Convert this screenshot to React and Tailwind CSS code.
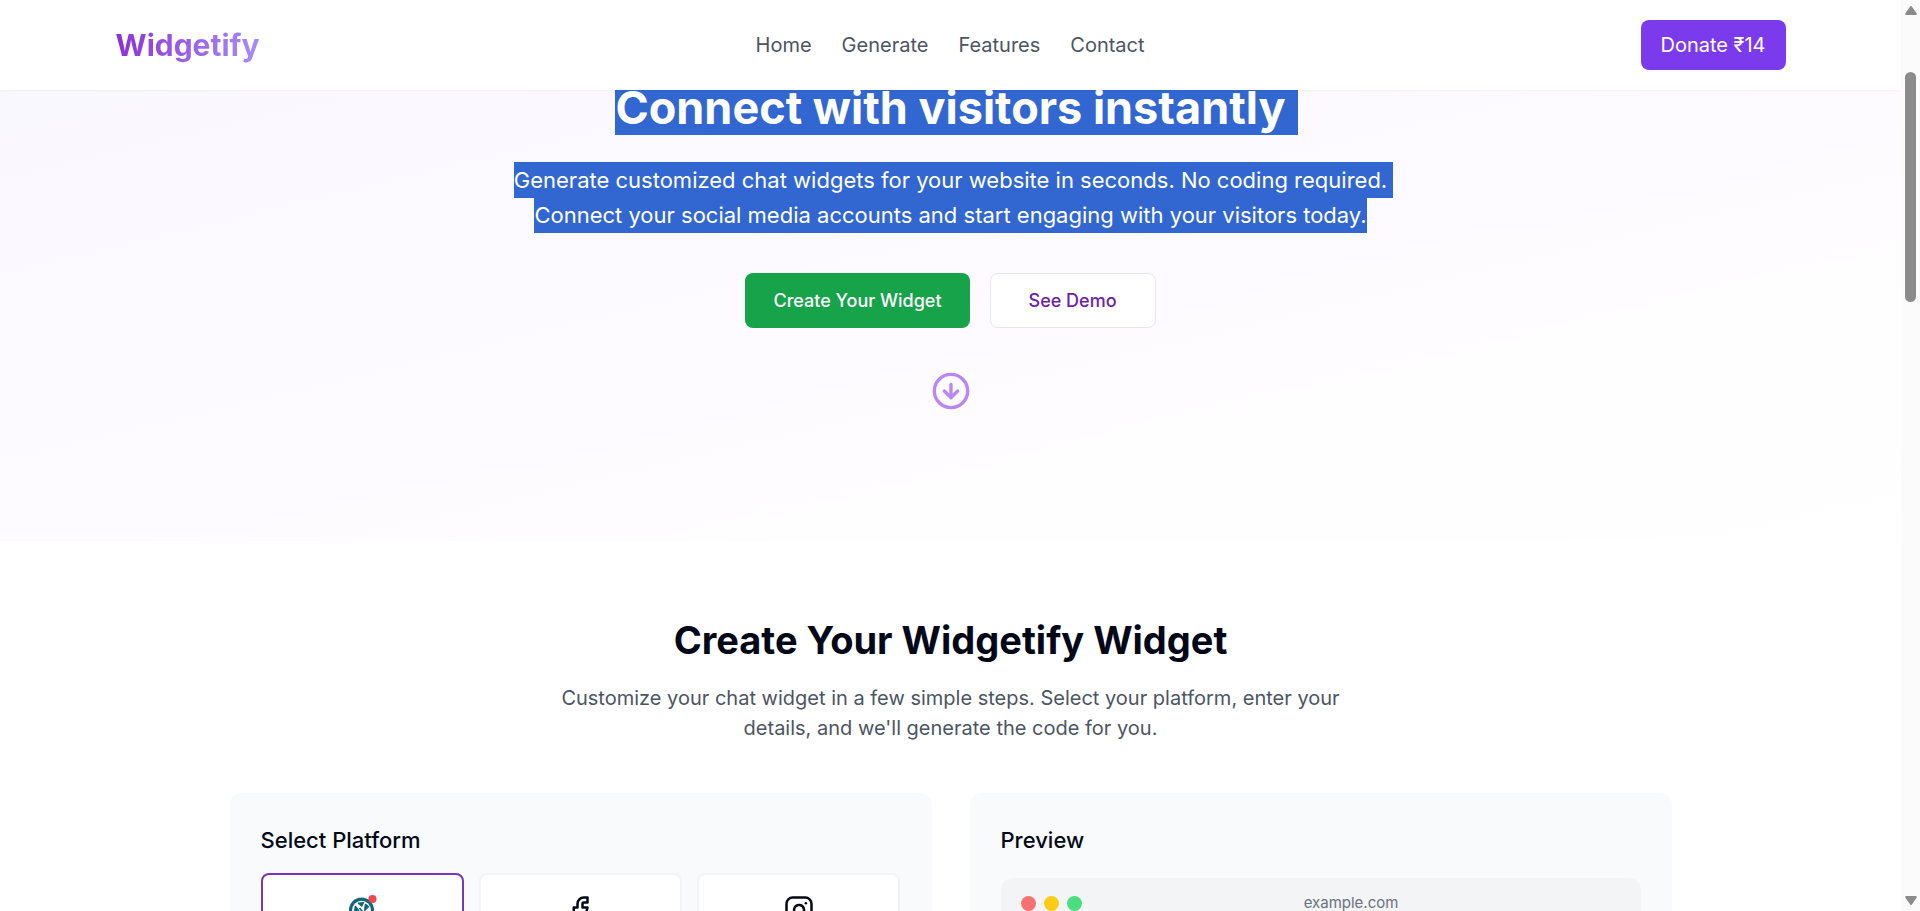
import { useState } from 'react';
import { CircleArrowDown, Facebook, Instagram } from 'lucide-react';

const navLinks = ['Home', 'Generate', 'Features', 'Contact'];

const platforms = [
  { id: 'all', label: 'All in one', icon: <AllInOneIcon /> },
  { id: 'facebook', label: 'Facebook', icon: <Facebook size={30} /> },
  { id: 'instagram', label: 'Instagram', icon: <Instagram size={30} /> },
];

export default function App() {
  return (
    <div className="flex h-screen overflow-hidden bg-white font-['Inter',sans-serif] text-[20px] leading-[30px] text-[#020817]">
      <div className="flex min-w-0 flex-1 flex-col">
        <Header />
        <main>
          <Hero />
          <Generator />
        </main>
      </div>
      <Scrollbar />
    </div>
  );
}

function Header() {
  return (
    <header className="z-10 bg-white shadow-[0_1px_2px_rgba(0,0,0,0.04)]">
      <div className="mx-auto flex max-w-[1750px] items-center justify-between px-10 py-5">
        <a
          href="#"
          className="bg-linear-to-r from-[#8b2fd6] to-[#a78bfa] bg-clip-text text-[30px] leading-10 font-bold text-transparent"
        >
          Widgetify
        </a>
        <nav className="flex gap-[30px] text-[#4b5563]">
          {navLinks.map((link) => (
            <a key={link} href={`#${link.toLowerCase()}`}>
              {link}
            </a>
          ))}
        </nav>
        <button type="button" className="rounded-lg bg-[#7c3aed] px-5 py-[10px] text-white">
          Donate ₹14
        </button>
      </div>
    </header>
  );
}

function Hero() {
  return (
    <section className="flex flex-col items-center bg-linear-to-br from-[#faf8ff] via-[#fdfbff] to-white pb-[130px] text-center">
      <h1 className="text-[45px] leading-9 font-bold">
        <span className="-mr-3 bg-[#3267d1] pr-3 text-white">Connect with visitors instantly</span>
      </h1>
      <p className="mt-[37px] text-[22px] leading-[35px] text-white">
        <span className="-mr-[6px] bg-[#3267d1] py-[5px] pr-[6px]">
          Generate customized chat widgets for your website in seconds. No coding required.
        </span>
        <br />
        <span className="bg-[#3267d1] py-[5px]">
          Connect your social media accounts and start engaging with your visitors today.
        </span>
      </p>
      <div className="mt-10 flex gap-5 text-[18px] leading-[25px] font-medium">
        <button type="button" className="rounded-lg bg-[#16a34a] px-7 py-[15px] text-white">
          Create Your Widget
        </button>
        <button
          type="button"
          className="rounded-lg border border-[#e9e5f2] bg-white px-[38px] py-[14px] text-[#6b21a8]"
        >
          See Demo
        </button>
      </div>
      <CircleArrowDown size={40} className="mt-[43px] text-[#bb86f3]" />
    </section>
  );
}

function Generator() {
  const [selected, setSelected] = useState('all');

  return (
    <section className="px-10 pt-[77px] pb-20">
      <div className="mx-auto max-w-[840px] text-center">
        <h2 className="text-[38px] leading-[45px] font-bold">Create Your Widgetify Widget</h2>
        <p className="mt-5 text-[#4b5563]">
          Customize your chat widget in a few simple steps. Select your platform, enter your
          details, and we'll generate the code for you.
        </p>
      </div>

      <div className="mx-auto mt-[50px] grid max-w-[1442px] grid-cols-2 gap-[38px]">
        <div className="rounded-xl bg-[#f9fafb] px-[31px] py-[30px]">
          <h3 className="text-[22px] leading-[35px] font-medium">Select Platform</h3>
          <div className="mt-[15px] grid grid-cols-3 gap-[15px]">
            {platforms.map((p) => (
              <button
                key={p.id}
                type="button"
                aria-label={p.label}
                aria-pressed={selected === p.id}
                onClick={() => setSelected(p.id)}
                className={`flex h-[110px] justify-center rounded-lg border-2 bg-white pt-5 ${
                  selected === p.id ? 'border-[#7438b8]' : 'border-[#f3f4f6]'
                }`}
              >
                {p.icon}
              </button>
            ))}
          </div>
        </div>

        <div className="rounded-xl bg-[#f9fafb] px-[31px] py-[30px]">
          <h3 className="text-[22px] leading-[35px] font-medium">Preview</h3>
          <div className="mt-5 h-[400px] rounded-xl bg-[#f3f4f6] px-5 py-[15px]">
            <div className="flex items-center">
              <div className="flex gap-2">
                <span className="size-[15px] rounded-full bg-[#f87171]" />
                <span className="size-[15px] rounded-full bg-[#facc15]" />
                <span className="size-[15px] rounded-full bg-[#4ade80]" />
              </div>
              <span className="flex-1 text-center text-[15px] leading-5 text-[#6b7280]">
                example.com
              </span>
            </div>
          </div>
        </div>
      </div>
    </section>
  );
}

function AllInOneIcon() {
  return (
    <svg width="30" height="30" viewBox="0 0 30 30" fill="none" aria-hidden="true">
      <circle cx="14.500" cy="15" r="12.500" fill="#12657a" />
      <circle cx="14.500" cy="15" r="9.300" fill="#fff" />
      <path
        d="M11.500 8.200l3.200 2.800 1.600-3.300zM18.500 9.500l2.800 2.200-3.600 3.400zM8.500 11.500l3 4-4 2zM12.500 13l6 7.500M10.500 21.500l2.500-4"
        fill="#12657a"
        stroke="#12657a"
        strokeWidth="1.600"
        strokeLinejoin="round"
      />
      <circle cx="25.500" cy="4" r="4" fill="#f0474f" />
    </svg>
  );
}

function Scrollbar() {
  return (
    <div className="flex w-[19px] shrink-0 flex-col items-center bg-[#fbfbfb] py-[6px]" aria-hidden="true">
      <svg width="12" height="9" viewBox="0 0 12 9" fill="#8b8b8b">
        <path d="M5 .7a1.200 1.200 0 0 1 2 0l4.600 6.600q.8 1.700-1 1.700H1.400q-1.800 0-1-1.700z" />
      </svg>
      <div className="mt-[57px] h-[230px] w-[11px] rounded-full bg-[#8b8b8b]" />
      <svg className="mt-auto" width="12" height="9" viewBox="0 0 12 9" fill="#8b8b8b">
        <path d="M5 8.300a1.200 1.200 0 0 0 2 0l4.600-6.600q.8-1.700-1-1.700H1.400q-1.800 0-1 1.700z" />
      </svg>
    </div>
  );
}
